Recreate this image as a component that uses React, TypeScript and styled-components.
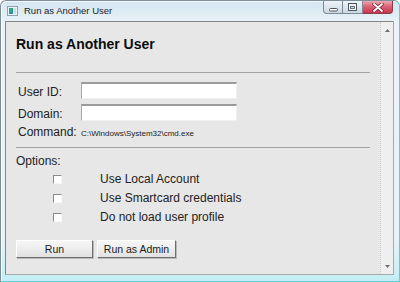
import styled, { createGlobalStyle } from "styled-components";

const GlobalStyle = createGlobalStyle`
  html, body {
    margin: 0;
    padding: 0;
  }
  body {
    width: 400px;
    height: 282px;
    overflow: hidden;
    font-family: "Liberation Sans", Arial, sans-serif;
    background: #ffffff;
  }
`;

const Window = styled.div`
  box-sizing: border-box;
  width: 400px;
  height: 282px;
  display: flex;
  flex-direction: column;
  border: 1px solid #7d8e9b;
  border-right-color: #62c9d8;
  border-bottom-color: #62c9d8;
  border-radius: 6px 6px 0 0;
  background: linear-gradient(180deg, #d3e5f1 0%, #eaf3f8 8%, #e7f3f7 85%, #c2eef5 100%);
  box-shadow: inset 1px 1px 0 rgba(255, 255, 255, 0.8);
  padding: 0 5px 6px 4px;
`;

const TitleBar = styled.div`
  height: 20px;
  display: flex;
  align-items: flex-start;
`;

const TitleIcon = styled.svg`
  margin: 5px 0 0 2px;
  flex: none;
`;

const TitleText = styled.span`
  margin-left: 6px;
  font-size: 9.5px;
  line-height: 20px;
  color: #1b1b1b;
`;

const CaptionGroup = styled.div`
  margin-left: auto;
  margin-right: 1px;
  display: flex;
  height: 13px;
`;

const CaptionButton = styled.div<{ $w: number; $first?: boolean }>`
  box-sizing: border-box;
  width: ${(p) => p.$w}px;
  height: 13px;
  display: flex;
  align-items: center;
  justify-content: center;
  border: 1px solid #7c8b97;
  border-top: none;
  border-left: ${(p) => (p.$first ? "1px solid #7c8b97" : "none")};
  border-bottom-left-radius: ${(p) => (p.$first ? "4px" : "0")};
  background: linear-gradient(180deg, #eef3f7 0%, #dde6ed 50%, #cbd7e0 100%);
`;

const CloseButton = styled(CaptionButton)`
  border-color: #8e3a48;
  border-bottom-right-radius: 4px;
  background: linear-gradient(180deg, #eba9b3 0%, #da6378 45%, #c9364f 100%);
`;

const Client = styled.div`
  flex: 1;
  display: flex;
  border: 1px solid #858585;
  border-right-color: #a9a9a9;
  border-bottom-color: #a9a9a9;
  background: #e7e7e7;
`;

const Content = styled.div`
  flex: 1;
  padding: 14px 10px 0 10px;
  display: flex;
  flex-direction: column;
`;

const Heading = styled.h1`
  margin: 0;
  font-size: 14px;
  line-height: 16px;
  font-weight: bold;
  color: #0d0d0d;
`;

const Divider = styled.div<{ $top: number }>`
  height: 1px;
  margin-top: ${(p) => p.$top}px;
  background: #a3a3a3;
`;

const Fields = styled.div`
  margin-top: 9px;
  display: flex;
  flex-direction: column;
  gap: 5px;
`;

const FieldRow = styled.div`
  display: flex;
  align-items: center;
  height: 17px;
`;

const CommandRow = styled.div`
  display: flex;
  align-items: baseline;
  height: 14px;
  line-height: 14px;
  margin-top: -1px;
`;

const Label = styled.label<{ $shift?: number }>`
  box-sizing: border-box;
  width: 65px;
  padding: ${(p) => p.$shift ?? 0}px 0 0 2px;
  font-size: 12px;
  color: #222222;
`;

const TextInput = styled.input`
  box-sizing: border-box;
  width: 156px;
  height: 17px;
  margin: 0;
  padding: 0 2px;
  border: 1px solid #f0f0f0;
  border-top: 2px solid #9a9a9a;
  border-left-color: #a9a9a9;
  background: #ffffff;
  outline: none;
`;

const CommandValue = styled.span`
  font-size: 8px;
  color: #222222;
`;

const OptionsLabel = styled.div`
  margin-top: 6px;
  font-size: 12px;
  line-height: 14px;
  color: #222222;
`;

const OptionList = styled.div`
  margin-top: 1px;
  display: flex;
  flex-direction: column;
`;

const OptionRow = styled.label`
  display: flex;
  align-items: center;
  height: 19px;
  font-size: 12px;
  color: #222222;
`;

const Check = styled.span`
  box-sizing: border-box;
  width: 9px;
  height: 9px;
  margin: 1px 38px 0 37px;
  border: 1px solid #f8f8f8;
  border-top-color: #8c8c8c;
  border-left-color: #8c8c8c;
  background: #ffffff;
`;

const ButtonRow = styled.div`
  margin-top: 14px;
  display: flex;
  gap: 4px;
`;

const Button = styled.button<{ $w: number }>`
  box-sizing: border-box;
  width: ${(p) => p.$w}px;
  height: 18px;
  margin: 0;
  padding: 0;
  font-family: "Liberation Sans", Arial, sans-serif;
  font-size: 10.5px;
  color: #1a1a1a;
  border: 1px solid #ffffff;
  border-right-color: #6f6f6f;
  border-bottom-color: #6f6f6f;
  box-shadow: 1px 1px 0 #b9b9b9;
  background: linear-gradient(180deg, #f6f6f6 0%, #ececec 55%, #e0e0e0 100%);
`;

const Scrollbar = styled.div`
  width: 12px;
  display: flex;
  flex-direction: column;
  justify-content: space-between;
  align-items: center;
  padding: 7px 0 6px;
  border-left: 1px dotted #cdcdcd;
  background: #efefef;
`;

const options = ["Use Local Account", "Use Smartcard credentials", "Do not load user profile"];

export default function App() {
  return (
    <>
      <GlobalStyle />
      <Window>
        <TitleBar>
          <TitleIcon width="11" height="10" viewBox="0 0 11 10">
            <defs>
              <linearGradient id="ico" x1="0" y1="0" x2="1" y2="1">
                <stop offset="0" stopColor="#35b85a" />
                <stop offset="1" stopColor="#2a86c6" />
              </linearGradient>
            </defs>
            <rect x="0.5" y="0.5" width="10" height="9" fill="#eef2f5" stroke="#8ea2b2" />
            <rect x="2" y="2" width="4" height="6" fill="url(#ico)" />
            <rect x="6.5" y="2" width="2.5" height="6" fill="#d3dde5" />
          </TitleIcon>
          <TitleText>Run as Another User</TitleText>
          <CaptionGroup>
            <CaptionButton $w={20} $first>
              <svg width="9" height="9" viewBox="0 0 9 9">
                <rect x="0.5" y="5.5" width="8" height="2.5" rx="1" fill="#ffffff" stroke="#4a5661" />
              </svg>
            </CaptionButton>
            <CaptionButton $w={20}>
              <svg width="9" height="8" viewBox="0 0 9 8">
                <rect x="0.5" y="0.5" width="8" height="7" fill="none" stroke="#4a5661" />
                <rect x="1.5" y="2.5" width="6" height="4" fill="#ffffff" stroke="#ffffff" strokeWidth="0.6" />
                <rect x="2.5" y="3.5" width="4" height="2" fill="#cfd9e1" stroke="#4a5661" strokeWidth="0.8" />
              </svg>
            </CaptionButton>
            <CloseButton $w={30}>
              <svg width="12" height="9" viewBox="0 0 12 9">
                <path d="M2 1 L10 8 M10 1 L2 8" stroke="#7a2232" strokeWidth="3.4" strokeLinecap="round" />
                <path d="M2 1 L10 8 M10 1 L2 8" stroke="#ffffff" strokeWidth="1.8" strokeLinecap="round" />
              </svg>
            </CloseButton>
          </CaptionGroup>
        </TitleBar>
        <Client>
          <Content>
            <Heading>Run as Another User</Heading>
            <Divider $top={20} />
            <Fields>
              <FieldRow>
                <Label $shift={2}>User ID:</Label>
                <TextInput />
              </FieldRow>
              <FieldRow>
                <Label $shift={2}>Domain:</Label>
                <TextInput />
              </FieldRow>
              <CommandRow>
                <Label>Command:</Label>
                <CommandValue>C:\Windows\System32\cmd.exe</CommandValue>
              </CommandRow>
            </Fields>
            <Divider $top={8} />
            <OptionsLabel>Options:</OptionsLabel>
            <OptionList>
              {options.map((o) => (
                <OptionRow key={o}>
                  <Check />
                  {o}
                </OptionRow>
              ))}
            </OptionList>
            <ButtonRow>
              <Button $w={77}>Run</Button>
              <Button $w={79}>Run as Admin</Button>
            </ButtonRow>
          </Content>
          <Scrollbar>
            <svg width="5" height="3" viewBox="0 0 5 3">
              <path d="M0 3 L2.5 0 L5 3 Z" fill="#6e6e6e" />
            </svg>
            <svg width="5" height="3" viewBox="0 0 5 3">
              <path d="M0 0 L2.5 3 L5 0 Z" fill="#6e6e6e" />
            </svg>
          </Scrollbar>
        </Client>
      </Window>
    </>
  );
}
